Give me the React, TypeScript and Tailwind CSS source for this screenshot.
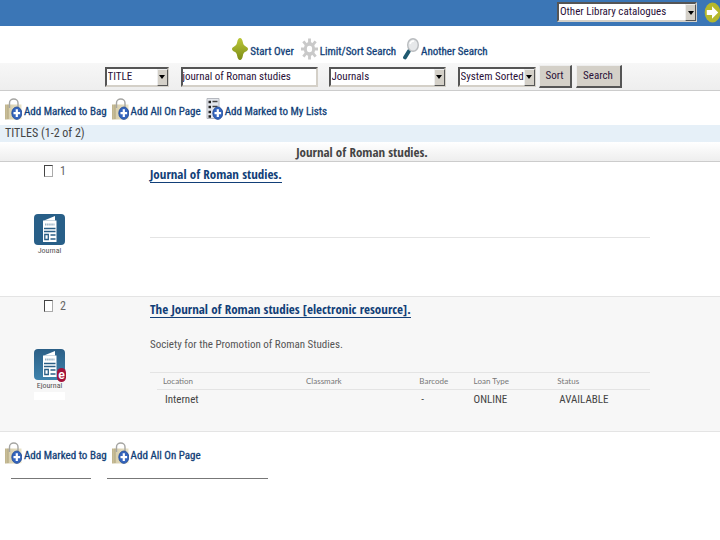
import React, { useState } from 'react';

const uiFont = "font-['Liberation_Sans_Narrow','Roboto_Condensed','Liberation_Sans',sans-serif]";
const titleFont = "font-['Open_Sans_Condensed','Lato',sans-serif]";

interface SelectBoxProps {
  label: string;
  options: string[];
  className: string;
}

const SelectBox: React.FC<SelectBoxProps> = ({ label, options, className }) => (
  <div className={`relative h-5 shrink-0 ${className}`}>
    <select
      aria-label={label}
      className="block h-full w-full appearance-none border-2 border-t-[#555] border-l-[#555] border-r-[#d4d0c8] border-b-[#d4d0c8] bg-white pl-px pr-2 text-[11px] leading-4 text-[#2a1038] outline-none"
    >
      {options.map((o) => (
        <option key={o}>{o}</option>
      ))}
    </select>
    {/* Drop-down arrow */}
    <span className="pointer-events-none absolute top-0.5 right-px bottom-px flex w-[11px] items-center justify-center border border-t-[#eee] border-l-[#eee] border-r-[#555] border-b-[#555] bg-[#d4d0c8]">
      <svg viewBox="0 0 6 4" className="h-1 w-1.5">
        <path d="M0 0h6L3 4z" fill="#000" />
      </svg>
    </span>
  </div>
);

const StarIcon = () => (
  <svg viewBox="0 0 16 22" className="h-[22px] w-4 shrink-0">
    <defs>
      <linearGradient id="star" x1="0" y1="0" x2="0" y2="1">
        <stop offset="0" stopColor="#bcc83a" />
        <stop offset="1" stopColor="#7c8c16" />
      </linearGradient>
    </defs>
    <path d="M8 0c1.500 0 2.500 2 2.800 4 .4 2.500 1.200 3.500 2.700 4.200C15 9 16 10 16 11s-1 2-2.500 2.800c-1.500.7-2.300 1.700-2.700 4.200-.3 2-1.300 4-2.800 4s-2.500-2-2.800-4c-.4-2.500-1.200-3.500-2.700-4.200C1 13 0 12 0 11s1-2 2.500-2.800C4 7.500 4.800 6.500 5.200 4 5.500 2 6.500 0 8 0z" fill="url(#star)" />
  </svg>
);

const GearIcon = () => (
  <svg viewBox="0 0 18 22" className="h-[22px] w-[17px] shrink-0">
    <g stroke="#c9c9c9" strokeWidth="3">
      <path d="M9 0v22M0 11h18M2.500 3l13 16M15.500 3l-13 16" />
    </g>
    <ellipse cx="9" cy="11" rx="6" ry="7.500" fill="#c9c9c9" />
    <ellipse cx="9" cy="11" rx="2.800" ry="3.500" fill="#fff" />
  </svg>
);

const MagnifierIcon = () => (
  <svg viewBox="0 0 16 22" className="h-[22px] w-4 shrink-0">
    <path d="M6 13 2 19.500" stroke="#1f5a70" strokeWidth="3.800" strokeLinecap="round" />
    <ellipse cx="10" cy="7" rx="5.300" ry="6.300" fill="#e6e8ea" stroke="#b9bcbf" strokeWidth="1.400" />
    <path d="M7 6c.5-2 2-3 4-3" stroke="#fff" strokeWidth="1.500" fill="none" />
  </svg>
);

const PlusBadge = () => (
  <>
    <ellipse cx="11.800" cy="15.200" rx="5" ry="6.200" fill="#3565bd" stroke="#1d4796" strokeWidth=".8" />
    <path d="M11.800 11.300v7.800M8.500 15.200h6.600" stroke="#fff" strokeWidth="2.200" />
  </>
);

const BagIcon = () => (
  <svg viewBox="0 0 17 22" className="h-[22px] w-[17px] shrink-0">
    <defs>
      <linearGradient id="bag" x1="0" y1="0" x2="1" y2="0">
        <stop offset="0" stopColor="#beb28a" />
        <stop offset=".25" stopColor="#d8cfae" />
        <stop offset="1" stopColor="#e9e2c8" />
      </linearGradient>
    </defs>
    <path d="M0 6.500h16.500V21l-3 .5H0z" fill="url(#bag)" />
    <path d="M3 6.500V21" stroke="#a2956b" strokeWidth=".7" />
    <path d="M4.500 10V5c0-5.300 8.500-5.300 8.500 0v5" fill="none" stroke="#a5a5a2" strokeWidth="1.400" />
    <PlusBadge />
  </svg>
);

const ListIcon = () => (
  <svg viewBox="0 0 17 22" className="h-[22px] w-[17px] shrink-0">
    <path d="M1 .5h12v20H1z" fill="#e4e7ec" stroke="#b5b8bf" />
    <path d="M2.500 4h2.500M2.500 9h2.500M2.500 14h2.500M2.500 18.500h2.500" stroke="#222" strokeWidth="2.600" />
    <path d="M6.500 3.500h5M6.500 8.500h5" stroke="#444" strokeWidth="1.600" />
    <PlusBadge />
  </svg>
);

const JournalIcon: React.FC<{ electronic?: boolean }> = ({ electronic }) => (
  <svg viewBox="0 0 31 31" className="block h-[31px] w-[31px]">
    <defs>
      <linearGradient id="journal" x1="0" y1="0" x2="0" y2="1">
        <stop offset="0" stopColor="#2b5f86" />
        <stop offset="1" stopColor="#3f83ad" />
      </linearGradient>
    </defs>
    <rect width="31" height="31" rx="4" fill={electronic ? 'url(#journal)' : '#285f88'} />
    <path d="M10 6.500 21 2v4.500z" fill="#fff" />
    <path d="M9 6.500h13.500V28H9z" fill="#fff" />
    <path d="M11 10.500h9.500" stroke="#9bb4c6" strokeWidth="1.800" strokeDasharray="1.500 .6" />
    <path d="M10 14.500h11.500M10 17.500h11.500M16.500 21h5M16.500 25h5" stroke="#2b5f86" strokeWidth="1.400" />
    <path d="M10.800 20.500h3.500v5h-3.500z" fill="#fff" stroke="#2b5f86" strokeWidth="1.300" />
  </svg>
);

const ActionLink: React.FC<{ icon: React.ReactNode; children: string }> = ({ icon, children }) => (
  <a href="#" className="flex items-end gap-0.5 text-[11px] leading-4 whitespace-nowrap text-[#123f78] hover:underline">
    {icon}
    <span className="[-webkit-text-stroke:0.3px]">{children}</span>
  </a>
);

interface RecordRowProps {
  index: number;
  title: string;
  kind: string;
  electronic?: boolean;
  children?: React.ReactNode;
}

const RecordRow: React.FC<RecordRowProps> = ({ index, title, kind, electronic, children }) => (
  <article className={`flex min-h-[135px] border-b border-[#e4e4e4] ${electronic ? 'bg-[#f7f7f7]' : 'bg-white'}`}>
    <div className="w-[150px] shrink-0">
      <label className="ml-11 flex items-center gap-[7px] pt-px text-[12px] leading-4 text-[#666]">
        <input
          type="checkbox"
          aria-label={`Mark ${title}`}
          className="h-3 w-[9px] appearance-none border border-t-[#444] border-l-[#444] border-r-[#aaa] border-b-[#aaa] bg-white checked:bg-[#123f78]"
        />
        {index}
      </label>
      <div className={`mt-[35px] ml-[34px] h-[51px] w-[31px] ${electronic ? 'bg-white' : ''}`}>
        <div className="relative">
          <JournalIcon electronic={electronic} />
          {electronic && (
            <span className="absolute -right-px -bottom-0.5 flex h-3.5 w-[9px] items-center justify-center rounded-full bg-[#a3123a] font-['Liberation_Sans',sans-serif] text-[12px] leading-3 font-bold text-white">
              e
            </span>
          )}
        </div>
        <p className={`text-center text-[8px] leading-3 text-[#555] ${electronic ? 'bg-[#f7f7f7]' : ''}`}>{kind}</p>
      </div>
    </div>
    <div className="mr-[70px] min-w-0 flex-1 pt-1">
      <a href="#" className={`inline-block border-b border-[#123f78] text-[13px] leading-4 font-bold text-[#123f78] ${titleFont}`}>
        {title}
      </a>
      {children}
    </div>
  </article>
);

export default function App() {
  const [query, setQuery] = useState('journal of Roman studies');

  return (
    <div className={`min-h-screen bg-white text-[11px] leading-4 ${uiFont}`}>
      {/* Top bar */}
      <header className="flex h-[26px] items-center justify-end gap-[7px] overflow-hidden bg-[#3b76b6] pb-0.5">
        <SelectBox label="Catalogue" className="w-[140px]" options={['Other Library catalogues']} />
        <button type="button" aria-label="Go" className="-mr-px">
          <svg viewBox="0 0 17 22" className="h-[21px] w-[17px]">
            <ellipse cx="8.500" cy="11" rx="8.200" ry="10.500" fill="#b5b82c" />
            <path d="M2.500 8.500h5.500V4.500l6.500 6.500-6.500 6.500v-4H2.500z" fill="#fff" />
          </svg>
        </button>
      </header>

      {/* Search tools */}
      <nav className="flex h-[37px] items-end justify-center gap-[7px] pb-[3px]">
        <ActionLink icon={<StarIcon />}>Start Over</ActionLink>
        <ActionLink icon={<GearIcon />}>Limit/Sort Search</ActionLink>
        <ActionLink icon={<MagnifierIcon />}>Another Search</ActionLink>
      </nav>

      <form
        onSubmit={(e) => e.preventDefault()}
        className="flex h-7 items-center justify-center border-b border-[#ccc] bg-linear-to-b from-[#f7f7f7] to-[#eeeeee] pl-1.5"
      >
        <SelectBox label="Index" className="w-16" options={['TITLE', 'AUTHOR', 'SUBJECT']} />
        <input
          type="text"
          aria-label="Search text"
          value={query}
          onChange={(e) => setQuery(e.target.value)}
          className="ml-3 h-5 w-[137px] border-2 border-t-[#555] border-l-[#555] border-r-[#d4d0c8] border-b-[#d4d0c8] bg-white text-[11px] leading-4 text-[#2a1038] outline-none"
        />
        <SelectBox label="Material" className="ml-[11px] w-[117px]" options={['Journals', 'Books']} />
        <SelectBox label="Sort order" className="ml-3 w-[78px]" options={['System Sorted', 'Title', 'Date']} />
        <button type="submit" className="ml-[3px] h-[23px] w-[33px] border border-t-[#eee] border-l-[#eee] border-r-2 border-b-2 border-r-[#555] border-b-[#555] bg-[#d4d0c8] text-[#2a1038]">
          Sort
        </button>
        <button type="submit" className="ml-1 h-[23px] w-[46px] border border-t-[#eee] border-l-[#eee] border-r-2 border-b-2 border-r-[#555] border-b-[#555] bg-[#d4d0c8] text-[#2a1038]">
          Search
        </button>
      </form>

      <nav className="flex h-[34px] items-end gap-[5px] pb-[5px] pl-[5px]">
        <ActionLink icon={<BagIcon />}>Add Marked to Bag</ActionLink>
        <ActionLink icon={<BagIcon />}>Add All On Page</ActionLink>
        <ActionLink icon={<ListIcon />}>Add Marked to My Lists</ActionLink>
      </nav>

      {/* Results */}
      <main>
        <p className="h-[17px] bg-[#e6f0f8] pl-[5px] text-[12px] leading-4 text-[#444]">TITLES (1-2 of 2)</p>
        <h1 className={`h-5 border-b border-[#ccc] bg-linear-to-b from-white to-[#eeeeee] pl-1 text-center text-[13px] leading-5 font-bold text-[#444] ${titleFont}`}>
          Journal of Roman studies.
        </h1>

        <RecordRow index={1} title="Journal of Roman studies." kind="Journal">
          <hr className="mt-[53px] border-[#e4e4e4]" />
        </RecordRow>

        <RecordRow index={2} title="The Journal of Roman studies [electronic resource]." kind="Ejournal" electronic>
          <p className="mt-[18px] text-[#555]">Society for the Promotion of Roman Studies.</p>
          <div className="mt-[19px] border-t border-[#e4e4e4] pl-[7px]">
            <table className="w-full table-fixed text-left">
              <colgroup>
                <col className="w-[29%]" />
                <col className="w-[23%]" />
                <col className="w-[11%]" />
                <col className="w-[17%]" />
                <col className="w-[20%]" />
              </colgroup>
              <thead>
                <tr className="border-b border-[#e4e4e4] font-['Lato',sans-serif] text-[8px] leading-4 text-[#777]">
                  <th className="pl-1.5 font-normal">Location</th>
                  <th className="pl-1.5 font-normal">Classmark</th>
                  <th className="pl-1.5 font-normal">Barcode</th>
                  <th className="pl-1.5 font-normal">Loan Type</th>
                  <th className="pl-1.5 font-normal">Status</th>
                </tr>
              </thead>
              <tbody>
                <tr className="text-[11px] leading-5 text-[#444]">
                  <td className="pl-2">Internet</td>
                  <td />
                  <td className="pl-2">-</td>
                  <td className="pl-1.5">ONLINE</td>
                  <td className="pl-2">AVAILABLE</td>
                </tr>
              </tbody>
            </table>
          </div>
        </RecordRow>
      </main>

      <nav className="flex h-8 items-end gap-[5px] pl-[5px]">
        <ActionLink icon={<BagIcon />}>Add Marked to Bag</ActionLink>
        <ActionLink icon={<BagIcon />}>Add All On Page</ActionLink>
      </nav>
      <footer className="mt-3.5 ml-[11px] flex gap-4">
        <hr className="w-20 border-[#777]" />
        <hr className="w-[161px] border-[#777]" />
      </footer>
    </div>
  );
}
